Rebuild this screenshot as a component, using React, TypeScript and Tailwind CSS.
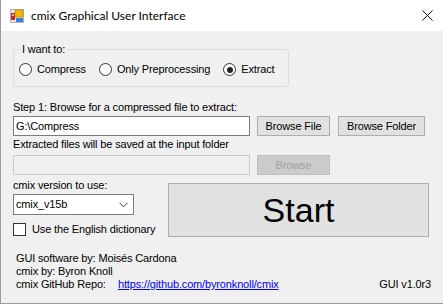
import React from "react";

function AppIcon() {
    return <svg width="14" height="14" viewBox="0 0 14 14">
        <rect x="0.5" y="0.5" width="13" height="13" fill="#e8e8e8" stroke="#b5b5b5"/>
        <rect x="1" y="4" width="4" height="7" fill="#c62828"/>
        <rect x="2" y="5" width="2" height="2" fill="#f4a0a0"/>
        <rect x="5" y="1" width="8" height="7" fill="#f2b705" stroke="#b98a00" strokeWidth="0.8"/>
        <rect x="6" y="9" width="7" height="4" fill="#3b7ddd"/>
    </svg>
}

function Radio({label, checked}: { label: string, checked?: boolean }) {
    return <div className="flex items-center gap-[5px]">
        <div className="w-[13px] h-[13px] rounded-full border border-[#333] bg-white flex items-center justify-center">
            {checked && <div className="w-[6px] h-[6px] rounded-full bg-[#222]"/>}
        </div>
        <span>{label}</span>
    </div>
}

function Btn({label, w, disabled}: { label: string, w: string, disabled?: boolean }) {
    return <div
        className={`${w} h-[20px] flex items-center justify-center border ${disabled ? 'bg-[#cccccc] border-[#bfbfbf] text-[#a0a0a0]' : 'bg-[#e1e1e1] border-[#adadad] text-black'}`}>
        {label}
    </div>
}

export default function App() {
    return <div
        className="w-[443px] h-[304px] bg-[#f0f0f0] border-l border-b border-[#9a9a9a] flex flex-col overflow-hidden text-[11px] leading-[13px] tracking-[-0.15px] text-black font-['Liberation_Sans',Arial,sans-serif]">
        {/* title bar */}
        <div className="h-[31px] bg-white flex items-center pl-[9px] pr-[10px] shrink-0 tracking-normal">
            <AppIcon/>
            <span className="ml-[7px] text-[12px] font-['Lato','Noto_Sans',sans-serif] text-black">cmix Graphical User Interface</span>
            <svg className="ml-auto" width="11" height="11" viewBox="0 0 11 11">
                <path d="M0.5 0.5 L10.5 10.5 M10.5 0.5 L0.5 10.5" stroke="#111" strokeWidth="1"/>
            </svg>
        </div>

        <div className="flex-1 flex flex-col pl-[12px] pr-[12px]">
            <fieldset className="mt-[12px] w-[276px] border border-[#dcdcdc] rounded-[3px] pl-[5px] pb-[10px]">
                <legend className="ml-[1px] px-[2px] leading-[13px]">I want to:</legend>
                <div className="mt-[7px] flex items-center gap-[13px]">
                    <Radio label="Compress"/>
                    <Radio label="Only Preprocessing"/>
                    <Radio label="Extract" checked/>
                </div>
            </fieldset>

            <div className="mt-[14px]">Step 1: Browse for a compressed file to extract:</div>
            <div className="mt-[2px] flex items-start">
                <div className="w-[237px] h-[20px] bg-white border border-[#7a7a7a] flex items-center pl-[2px]">G:\Compress</div>
                <div className="ml-[7px]"><Btn label="Browse File" w="w-[73px]"/></div>
                <div className="ml-[8px]"><Btn label="Browse Folder" w="w-[87px]"/></div>
            </div>

            <div className="mt-[2px]">Extracted files will be saved at the input folder</div>
            <div className="mt-[4px] flex items-start">
                <div className="w-[237px] h-[20px] bg-[#f0f0f0] border border-[#cccccc]"/>
                <div className="ml-[7px]"><Btn label="Browse" w="w-[73px]" disabled/></div>
            </div>

            <div className="mt-[4px] flex items-start">
                <div className="w-[155px] flex flex-col">
                    <div>cmix version to use:</div>
                    <div
                        className="mt-[2px] w-[121px] h-[21px] bg-white border border-[#7a7a7a] flex items-center pl-[2px] pr-[5px]">
                        <span>cmix_v15b</span>
                        <svg className="ml-auto" width="9" height="6" viewBox="0 0 9 6">
                            <path d="M0.5 0.8 L4.5 4.8 L8.5 0.8" stroke="#444" strokeWidth="1" fill="none"/>
                        </svg>
                    </div>
                    <div className="mt-[8px] flex items-center gap-[6px]">
                        <div className="w-[13px] h-[13px] bg-white border border-[#333]"/>
                        <span>Use the English dictionary</span>
                    </div>
                </div>
                <div
                    className="mt-[4px] w-[261px] h-[54px] bg-[#e1e1e1] border border-[#adadad] flex items-center justify-center text-[34px] leading-none tracking-normal">
                    Start
                </div>
            </div>

            <div className="mt-[15px] pl-[3px] flex flex-col">
                <div>GUI software by: Moisés Cardona</div>
                <div>cmix by: Byron Knoll</div>
                <div className="flex">
                    <span className="w-[102px]">cmix GitHub Repo:</span>
                    <span className="text-[#0000ff] underline">https://github.com/byronknoll/cmix</span>
                    <span className="ml-auto">GUI v1.0r3</span>
                </div>
            </div>
        </div>
    </div>
}
